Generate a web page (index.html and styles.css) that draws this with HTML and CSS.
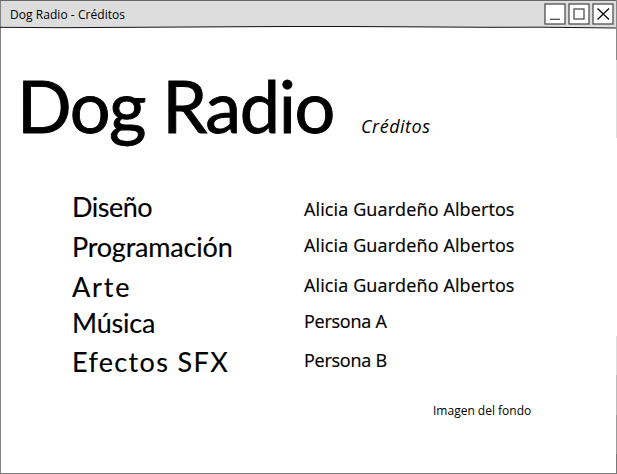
FILE: index.html
```html
<!DOCTYPE html>
<html lang="es">
<head>
<meta charset="utf-8">
<title>Dog Radio - Créditos</title>
<link rel="stylesheet" href="styles.css">
</head>
<body>
<div class="window">
  <header class="titlebar">
    <span class="caption">Dog Radio - Créditos</span>
    <svg class="controls" width="72" height="24" viewBox="0 0 72 24" fill="none" stroke="#505050" stroke-width="1.3">
      <g fill="#fff"><rect x="1" y="1" width="20" height="20"/><rect x="25" y="1" width="20" height="20"/><rect x="49" y="1" width="20" height="20"/></g>
      <path d="M6 16.3H16"/>
      <rect x="30" y="6" width="10" height="10"/>
      <path d="M53.5 5.5L65 16.5M65 5.5L53.5 16.5" stroke="#000" stroke-width="1.2"/>
    </svg>
  </header>
  <main class="content">
    <div class="heading">
      <h1>Dog Radio</h1>
      <p class="subtitle">Créditos</p>
    </div>
    <dl class="credits">
      <dt class="diseno">Diseño</dt><dd class="first">Alicia Guardeño Albertos</dd>
      <dt class="programacion">Programación</dt><dd>Alicia Guardeño Albertos</dd>
      <dt class="arte">Arte</dt><dd>Alicia Guardeño Albertos</dd>
      <dt class="musica">Música</dt><dd class="persona">Persona A</dd>
      <dt class="efectos">Efectos SFX</dt><dd class="persona">Persona B</dd>
    </dl>
    <p class="note">Imagen del fondo</p>
  </main>
  <svg class="frame" width="617" height="474" viewBox="0 0 617 474" fill="none">
    <path d="M.5 0V474M0 473.5H617" stroke="#808080"/>
    <path d="M0 .5H617" stroke="#686868"/>
    <path d="M0 27.3L60 27.7L285 26.5L350 26.5L490 27.3L540 27.2L617 28" stroke="#111"/>
    <path d="M616.5 0V60" stroke="#888"/>
    <path d="M616.5 60V138M616.5 336V375" stroke="#ddd"/>
    <path d="M616.5 375V415" stroke="#bbb"/>
    <path d="M616.5 415V454" stroke="#999"/>
    <path d="M616.5 454V474" stroke="#777"/>
  </svg>
</div>
</body>
</html>
```
FILE: styles.css
```css
* { box-sizing: border-box; }
body {
  margin: 0;
  background: #fff;
  color: #000;
  font-family: "Comic Sans MS", "Open Sans", sans-serif;
}
.window { position: relative; width: 617px; height: 474px; overflow: hidden; }
.titlebar {
  display: flex;
  justify-content: space-between;
  height: 27px;
  padding: 3px 1px 0 10px;
  background: #ddd;
}
.caption { font-size: 12px; line-height: 24px; letter-spacing: .05px; white-space: nowrap; }
.controls { display: block; }
.content { padding: 28px 0 0 20px; }
.heading { display: flex; align-items: baseline; height: 131px; }
h1 {
  margin: 0 0 0 -3px;
  width: 344px;
  font-family: "Comic Sans MS", Lato, sans-serif;
  font-size: 72px;
  font-weight: 400;
  line-height: 100px;
  letter-spacing: -1.4px;
  white-space: nowrap;
  -webkit-text-stroke: .9px #000;
}
.subtitle { margin: 0; font-size: 18px; font-style: italic; letter-spacing: .5px; }
.credits {
  display: grid;
  grid-template-columns: 232px 1fr;
  grid-template-rows: 40px 40px 36px 39px 40px;
  margin: 0 0 0 52px;
  white-space: nowrap;
}
dt {
  font-family: "Comic Sans MS", Lato, sans-serif;
  font-size: 27px;
  line-height: 42px;
  -webkit-text-stroke: .15px #000;
}
dd { margin: -1px 0 0; font-size: 18px; line-height: 40px; letter-spacing: .12px; -webkit-text-stroke: .2px #000; }
dd.first { margin-top: 3px; }
dd.persona { letter-spacing: -.25px; }
.diseno { letter-spacing: -.5px; }
.programacion { letter-spacing: -.2px; }
.arte { letter-spacing: 1.9px; }
.musica { letter-spacing: -.2px; }
.efectos { letter-spacing: 1.35px; }
.note { margin: 20px 0 0 413px; font-size: 12px; line-height: 20px; }
.frame { position: absolute; inset: 0; pointer-events: none; }
```
